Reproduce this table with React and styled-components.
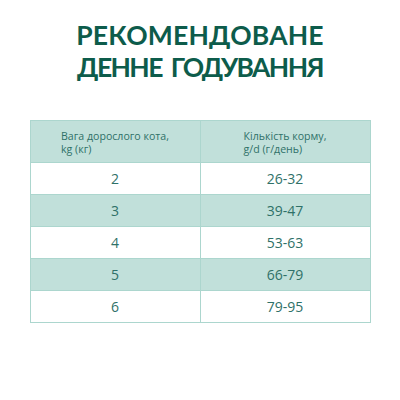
import React from "react";
import styled, { createGlobalStyle } from "styled-components";

const Global = createGlobalStyle`
  html, body { margin: 0; padding: 0; background: #ffffff; }
  body { font-family: "Open Sans", "Noto Sans", sans-serif; }
`;

const Page = styled.div`
  width: 400px;
  height: 400px;
  display: flex;
  flex-direction: column;
  align-items: center;
  padding-top: 19px;
  box-sizing: border-box;
`;

const Title = styled.h1`
  margin: 0;
  display: flex;
  flex-direction: column;
  align-items: center;
  font-family: "Lato", "Open Sans", sans-serif;
  font-weight: 700;
  font-size: 26.5px;
  line-height: 32px;
  color: #0d5c4b;
  text-align: center;
`;

const TitleLine = styled.span`
  display: block;
  white-space: nowrap;
  letter-spacing: ${(p) => p.$spacing}px;
  word-spacing: ${(p) => p.$words || 0}px;
`;

const Table = styled.table`
  margin-top: 37px;
  width: 341px;
  border-collapse: collapse;
  table-layout: fixed;
  color: #2f7168;
`;

const HeadCell = styled.th`
  background: #c1e0da;
  border: 1px solid #acd6ce;
  height: 41px;
  padding: 0;
  font-family: "Open Sans", sans-serif;
  font-weight: 400;
  font-size: 10.6px;
  line-height: 13px;
  text-align: center;
  vertical-align: middle;
`;

const HeadText = styled.span`
  display: inline-block;
  text-align: left;
  padding-top: 3px;
`;

const Row = styled.tr`
  background: ${(p) => (p.$shaded ? "#c1e0da" : "#ffffff")};
`;

const Cell = styled.td`
  border: 1px solid #acd6ce;
  height: 31px;
  padding: 0;
  text-align: center;
  vertical-align: middle;
  font-family: "Open Sans", sans-serif;
  font-size: 14px;
  line-height: 16px;
`;

const rows = [
  ["2", "26-32"],
  ["3", "39-47"],
  ["4", "53-63"],
  ["5", "66-79"],
  ["6", "79-95"],
];

export default function App() {
  return (
    <>
      <Global />
      <Page>
        <Title>
          <TitleLine $spacing={0.2}>РЕКОМЕНДОВАНЕ</TitleLine>
          <TitleLine $spacing={-1.6} $words={4}>ДЕННЕ ГОДУВАННЯ</TitleLine>
        </Title>
        <Table>
          <thead>
            <tr>
              <HeadCell>
                <HeadText>
                  Вага дорослого кота,
                  <br />
                  kg (кг)
                </HeadText>
              </HeadCell>
              <HeadCell>
                <HeadText>
                  Кількість корму,
                  <br />
                  g/d (г/день)
                </HeadText>
              </HeadCell>
            </tr>
          </thead>
          <tbody>
            {rows.map((r, i) => (
              <Row key={r[0]} $shaded={i % 2 === 1}>
                <Cell>{r[0]}</Cell>
                <Cell>{r[1]}</Cell>
              </Row>
            ))}
          </tbody>
        </Table>
      </Page>
    </>
  );
}
